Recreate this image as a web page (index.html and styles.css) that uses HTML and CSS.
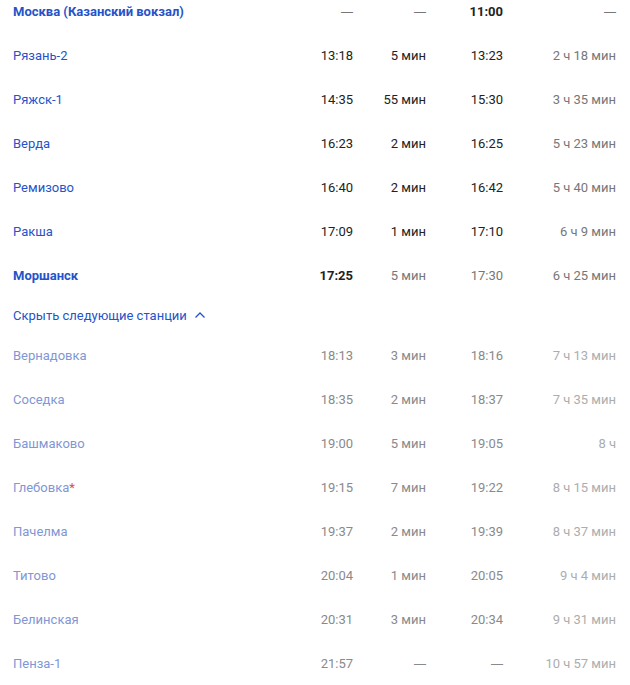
FILE: index.html
```html
<!DOCTYPE html>
<html lang="ru">
<head>
<meta charset="utf-8">
<link rel="stylesheet" href="styles.css">
</head>
<body>
<div class="schedule">
  <div class="row">
    <a class="name bold">Москва (Казанский вокзал)</a>
    <span class="c muted dash">—</span>
    <span class="c muted dash">—</span>
    <span class="c bold">11:00</span>
    <span class="c muted dash">—</span>
  </div>
  <div class="row">
    <a class="name">Рязань-2</a>
    <span class="c">13:18</span>
    <span class="c">5 мин</span>
    <span class="c">13:23</span>
    <span class="c muted">2 ч 18 мин</span>
  </div>
  <div class="row">
    <a class="name">Ряжск-1</a>
    <span class="c">14:35</span>
    <span class="c">55 мин</span>
    <span class="c">15:30</span>
    <span class="c muted">3 ч 35 мин</span>
  </div>
  <div class="row">
    <a class="name">Верда</a>
    <span class="c">16:23</span>
    <span class="c">2 мин</span>
    <span class="c">16:25</span>
    <span class="c muted">5 ч 23 мин</span>
  </div>
  <div class="row">
    <a class="name">Ремизово</a>
    <span class="c">16:40</span>
    <span class="c">2 мин</span>
    <span class="c">16:42</span>
    <span class="c muted">5 ч 40 мин</span>
  </div>
  <div class="row">
    <a class="name">Ракша</a>
    <span class="c">17:09</span>
    <span class="c">1 мин</span>
    <span class="c">17:10</span>
    <span class="c muted">6 ч 9 мин</span>
  </div>
  <div class="row">
    <a class="name bold">Моршанск</a>
    <span class="c bold">17:25</span>
    <span class="c muted">5 мин</span>
    <span class="c muted">17:30</span>
    <span class="c muted">6 ч 25 мин</span>
  </div>
  <div class="toggle">
    <a class="toggle-link">Скрыть следующие станции
      <svg class="chev" width="12" height="8" viewBox="0 0 12 8"><path d="M1.5 6.5 L6 2 L10.5 6.5" fill="none" stroke="currentColor" stroke-width="1.3"/></svg>
    </a>
  </div>
  <div class="row after">
    <a class="name">Вернадовка</a>
    <span class="c">18:13</span>
    <span class="c">3 мин</span>
    <span class="c">18:16</span>
    <span class="c muted">7 ч 13 мин</span>
  </div>
  <div class="row after">
    <a class="name">Соседка</a>
    <span class="c">18:35</span>
    <span class="c">2 мин</span>
    <span class="c">18:37</span>
    <span class="c muted">7 ч 35 мин</span>
  </div>
  <div class="row after">
    <a class="name">Башмаково</a>
    <span class="c">19:00</span>
    <span class="c">5 мин</span>
    <span class="c">19:05</span>
    <span class="c muted">8 ч</span>
  </div>
  <div class="row after">
    <a class="name">Глебовка<span class="star">*</span></a>
    <span class="c">19:15</span>
    <span class="c">7 мин</span>
    <span class="c">19:22</span>
    <span class="c muted">8 ч 15 мин</span>
  </div>
  <div class="row after">
    <a class="name">Пачелма</a>
    <span class="c">19:37</span>
    <span class="c">2 мин</span>
    <span class="c">19:39</span>
    <span class="c muted">8 ч 37 мин</span>
  </div>
  <div class="row after">
    <a class="name">Титово</a>
    <span class="c">20:04</span>
    <span class="c">1 мин</span>
    <span class="c">20:05</span>
    <span class="c muted">9 ч 4 мин</span>
  </div>
  <div class="row after">
    <a class="name">Белинская</a>
    <span class="c">20:31</span>
    <span class="c">3 мин</span>
    <span class="c">20:34</span>
    <span class="c muted">9 ч 31 мин</span>
  </div>
  <div class="row after">
    <a class="name">Пенза-1</a>
    <span class="c">21:57</span>
    <span class="c dash">—</span>
    <span class="c dash">—</span>
    <span class="c muted">10 ч 57 мин</span>
  </div>
</div>
</body>
</html>
```

FILE: styles.css
```css
html, body {
  margin: 0;
  padding: 0;
  background: #fff;
}
body {
  font-family: "Roboto", "Inter", sans-serif;
  font-size: 13px;
  color: #222;
  overflow: hidden;
}
.schedule {
  margin-top: -11px;
  padding: 0 14px 0 13px;
}
.row {
  display: grid;
  grid-template-columns: 1fr 80px 73px 77px 113px;
  align-items: center;
  height: 44px;
}
.name {
  color: #2653c9;
  text-decoration: none;
}
.c {
  text-align: right;
}
.dash {
  font-family: "Inter", sans-serif;
  font-size: 12px;
}
.bold {
  font-weight: 700;
}
.muted {
  color: #777;
}
.after .name {
  color: #7f97d4;
}
.after .c {
  color: #8a8a8a;
}
.after .c.muted {
  color: #adadad;
}
.star {
  color: #e0484e;
}
.toggle {
  height: 36px;
  display: flex;
  align-items: center;
}
.toggle-link {
  color: #2653c9;
  display: inline-flex;
  align-items: center;
  gap: 7px;
}
.chev {
  display: block;
  margin-top: -1px;
}
```
